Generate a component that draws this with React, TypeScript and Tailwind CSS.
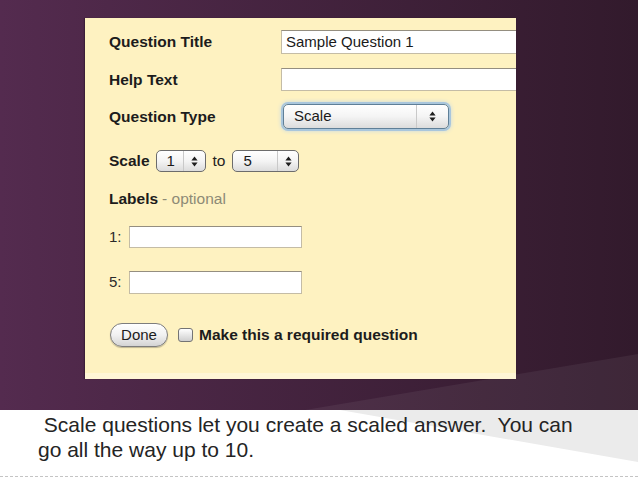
import React from 'react';

const Arrows = () => (
  <svg width="7" height="11" viewBox="0 0 7 11">
    <path d="M3.5 0.5 L6.6 4.4 H0.4Z M3.5 10.5 L6.6 6.6 H0.4Z" fill="#1f1f1f" />
  </svg>
);

function SelectBox({
  value,
  width,
  divider,
  glow,
}: {
  value: string;
  width: string;
  divider: string;
  glow?: boolean;
}) {
  return (
    <div
      className={`flex h-full shrink-0 items-center rounded-[5px] border bg-gradient-to-b from-white via-[#f4f4f4] to-[#dcdcdc] ${width} ${
        glow
          ? 'border-[#5f7f97] shadow-[0_0_0_2px_#a9c6dc,0_0_4px_2px_#c7d9e6]'
          : 'border-[#6c6c6c]'
      }`}
    >
      <span className={`shrink-0 pl-[10px] text-[15px] text-[#1a1a1a] ${divider}`}>{value}</span>
      <div className="flex h-full flex-1 items-center justify-center border-l border-[#c9c9c9]">
        <Arrows />
      </div>
    </div>
  );
}

function TextInput({ className, value }: { className: string; value?: string }) {
  return (
    <div
      className={`flex h-full shrink-0 items-center border border-[#c4bca6] border-t-[#948e80] bg-white pl-[4px] text-[15px] text-[#1a1a1a] ${className}`}
    >
      {value}
    </div>
  );
}

export default function App() {
  return (
    <div className="relative h-[479px] w-[638px] overflow-hidden bg-white font-['Liberation_Sans',Arial,sans-serif]">
      {/* Slide top */}
      <div className="relative h-[410px] bg-gradient-to-r from-[#542b4f] to-[#321a2c] pl-[85px] pt-[18px]">
        <svg className="absolute left-0 top-0" width="638" height="410" viewBox="0 0 638 410">
          <polygon points="305,410 638,354 638,410" fill="#ffffff" fillOpacity="0.06" />
        </svg>

        {/* Form card */}
        <div className="relative flex h-[361px] w-[431px] flex-col overflow-hidden border-b-[6px] border-[#fff6d6] bg-[#fef2c1] pl-[24px] pt-[12px] text-[15.5px] text-[#1c1c1c] shadow-[-1px_0_1px_rgba(0,0,0,0.25)]">
          <div className="flex h-[24px] items-center">
            <span className="w-[172px] shrink-0 font-bold">Question Title</span>
            <TextInput className="w-[260px]" value="Sample Question 1" />
          </div>
          <div className="mt-[14px] flex h-[23px] items-center">
            <span className="w-[172px] shrink-0 font-bold">Help Text</span>
            <TextInput className="w-[260px]" />
          </div>
          <div className="mt-[13px] flex h-[25px] items-center">
            <span className="w-[174px] shrink-0 font-bold">Question Type</span>
            <SelectBox value="Scale" width="w-[166px]" divider="w-[132px]" glow />
          </div>
          <div className="mt-[21px] flex h-[22px] items-center">
            <span className="mr-[6px] font-bold">Scale</span>
            <SelectBox value="1" width="w-[50px]" divider="w-[26px]" />
            <span className="mx-[7px] font-normal text-[#222]">to</span>
            <SelectBox value="5" width="w-[67px]" divider="w-[44px]" />
          </div>
          <div className="mt-[17px] flex h-[20px] items-center">
            <span className="font-bold">Labels</span>
            <span className="ml-[4px] text-[#8d8a76]">- optional</span>
          </div>
          <div className="mt-[17px] flex h-[22px] items-center">
            <span className="w-[20px] shrink-0 text-[15px] text-[#2a2a2a]">1:</span>
            <TextInput className="w-[173px]" />
          </div>
          <div className="mt-[23px] flex h-[23px] items-center">
            <span className="w-[20px] shrink-0 text-[15px] text-[#2a2a2a]">5:</span>
            <TextInput className="w-[173px]" />
          </div>
          <div className="mt-[29px] flex h-[24px] items-center">
            <button className="ml-[1px] flex h-[24px] w-[58px] items-center justify-center rounded-full border border-[#7d7d7d] bg-gradient-to-b from-white via-[#f1f1f1] to-[#d4d4d4] text-[15px] text-[#1c1c1c] shadow-[0_1px_1px_rgba(0,0,0,0.25)]">
              Done
            </button>
            <div className="ml-[10px] h-[14px] w-[15px] rounded-[3px] border border-[#747474] bg-gradient-to-b from-white to-[#cfcfcf]" />
            <span className="ml-[6px] font-bold">Make this a required question</span>
          </div>
        </div>
      </div>

      {/* Caption */}
      <div className="relative h-[69px]">
        <svg className="absolute left-0 top-0" width="638" height="69" viewBox="0 0 638 69">
          <polygon points="340,0 638,0 638,52" fill="#ebebeb" />
        </svg>
        <p className="relative pl-[38px] pt-[2px] text-[21px] leading-[25px] text-[#242424] whitespace-pre">
          {' Scale questions let you create a scaled answer.  You can'}
          <br />
          go all the way up to 10.
        </p>
        <div className="absolute bottom-[2px] left-0 w-full border-t border-dashed border-[#c4c4c4]" />
      </div>
    </div>
  );
}
